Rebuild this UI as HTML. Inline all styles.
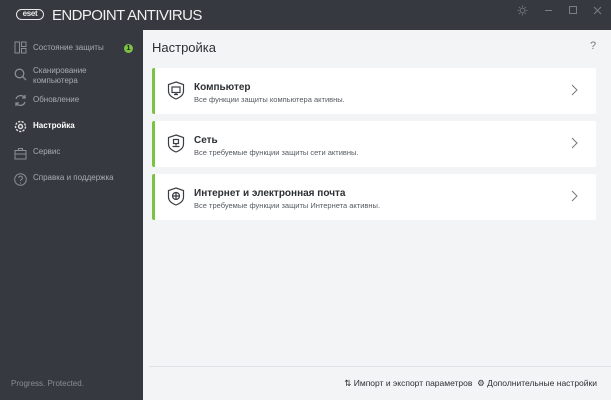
<!DOCTYPE html>
<html><head><meta charset="utf-8"><style>
*{margin:0;padding:0;box-sizing:border-box}
body{width:611px;height:400px;overflow:hidden;font-family:"Liberation Sans","DejaVu Sans",sans-serif;background:#363a40;position:relative}
.top{position:absolute;left:0;top:0;width:611px;height:30px;background:#363a40}
.logo{position:absolute;left:16px;top:9px;width:28px;height:11px;border:1.5px solid #e8e8e8;border-radius:6px;color:#e8e8e8;font-size:8px;font-weight:bold;line-height:8px;text-align:center;letter-spacing:-0.3px}
.brand{position:absolute;left:52px;top:7px;color:#f0f0f0;font-size:15px;letter-spacing:-0.6px}
.side{position:absolute;left:0;top:30px;width:143px;height:370px;background:#363a40}
.item{position:absolute;left:33px;color:#a8abb0;font-size:8px;line-height:10px}
.ic{position:absolute;left:14px;width:13px;height:13px}
.main{position:absolute;left:143px;top:30px;width:468px;height:370px;background:#f3f4f6}
h1{position:absolute;left:9px;top:10px;font-size:13px;font-weight:normal;color:#2c2f33}
.card{position:absolute;left:9px;width:444px;height:46px;background:#fff;border-left:3px solid #7dc242;border-radius:2px}
.ct{position:absolute;left:39px;top:14px;font-size:10px;font-weight:bold;color:#2c2f33}
.cs{position:absolute;left:39px;top:27px;font-size:7.5px;color:#555a60}
.sh{position:absolute;left:12px;top:13px}
.chev{position:absolute;right:18px;top:16px}
.foot{position:absolute;top:378px;right:14px;font-size:8.5px;color:#2c2f33;white-space:nowrap}
</style></head><body>
<div class="top">
<div class="logo">eset</div>
<div class="brand">ENDPOINT ANTIVIRUS</div>
<svg style="position:absolute;left:517px;top:5px" width="11" height="11" viewBox="0 0 11 11" stroke="#6a6e74" fill="none"><circle cx="5.5" cy="5.5" r="2.2"/><path d="M5.5 0.5v2M5.5 8.5v2M0.5 5.5h2M8.5 5.5h2M2 2l1.4 1.4M7.6 7.6L9 9M2 9l1.4-1.4M7.6 3.4L9 2"/></svg>
<svg style="position:absolute;left:545px;top:5px" width="40" height="11" stroke="#7a7e84" fill="none"><path d="M0 5.5h7"/><rect x="24.5" y="1.5" width="7" height="7"/></svg>
<svg style="position:absolute;left:593px;top:6px" width="9" height="9" stroke="#7a7e84"><path d="M1 1l7 7M8 1L1 8"/></svg>
</div>
<div class="side">
<svg class="ic" style="top:11px" viewBox="0 0 13 13" fill="none" stroke="#8a8e94"><rect x="1" y="1" width="4.5" height="11"/><rect x="7.5" y="1" width="4.5" height="4.5"/><rect x="7.5" y="7.5" width="4.5" height="4.5"/></svg>
<div class="item" style="top:13px">Состояние защиты</div>
<div style="position:absolute;left:124px;top:14px;width:9px;height:9px;border-radius:50%;background:#7dc242;color:#222;font-size:7px;font-weight:bold;text-align:center;line-height:9px">1</div>
<svg class="ic" style="top:38px" viewBox="0 0 13 13" fill="none" stroke="#8a8e94" stroke-width="1.3"><circle cx="5.5" cy="5.5" r="4.3"/><path d="M8.6 8.6L12 12"/></svg>
<div class="item" style="top:36px">Сканирование<br>компьютера</div>
<svg class="ic" style="top:64px" viewBox="0 0 13 13" fill="none" stroke="#8a8e94" stroke-width="1.3"><path d="M2 5A5 5 0 0 1 11 4M11 8A5 5 0 0 1 2 9"/><path d="M11 1v3H8M2 12V9h3"/></svg>
<div class="item" style="top:65px">Обновление</div>
<svg class="ic" style="top:90px" viewBox="0 0 13 13" fill="none" stroke="#e0e0e0" stroke-width="1.4"><circle cx="6.5" cy="6.5" r="2"/><circle cx="6.5" cy="6.5" r="5" stroke-dasharray="2.2 1.3"/></svg>
<div class="item" style="top:91px;color:#fff;font-weight:bold">Настройка</div>
<svg class="ic" style="top:117px" viewBox="0 0 13 13" fill="none" stroke="#8a8e94"><rect x="1" y="3.5" width="11" height="8.5"/><path d="M4.5 3.5V1.5h4v2M1 7h11"/></svg>
<div class="item" style="top:117px">Сервис</div>
<svg class="ic" style="top:143px" viewBox="0 0 13 13" fill="none" stroke="#8a8e94"><circle cx="6.5" cy="6.5" r="5.8"/><path d="M4.8 5a1.8 1.8 0 1 1 2.3 1.7c-.6.2-.6.7-.6 1.3M6.5 9.5v1"/></svg>
<div class="item" style="top:143px">Справка и поддержка</div>
<div class="item" style="left:11px;top:349px;color:#8a8e94">Progress. Protected.</div>
</div>
<div class="main">
<h1>Настройка</h1>
<div style="position:absolute;left:447px;top:10px;font-size:11px;color:#777">?</div>
<div class="card" style="top:38px">
<svg class="sh" width="18" height="19" viewBox="0 0 18 19" fill="none" stroke="#3a3d42" stroke-width="1.2"><path d="M9 1L16.5 3.5V10c0 4-3.5 6.5-7.5 8C5 16.5 1.5 14 1.5 10V3.5z"/><rect x="5" y="6" width="8" height="5.5"/><path d="M9 11.5v2M7 13.5h4"/></svg>
<div class="ct">Компьютер</div><div class="cs">Все функции защиты компьютера активны.</div>
<svg class="chev" width="7" height="12" fill="none" stroke="#777"><path d="M1 1l5 5-5 5"/></svg></div>
<div class="card" style="top:91px">
<svg class="sh" width="18" height="19" viewBox="0 0 18 19" fill="none" stroke="#3a3d42" stroke-width="1.2"><path d="M9 1L16.5 3.5V10c0 4-3.5 6.5-7.5 8C5 16.5 1.5 14 1.5 10V3.5z"/><rect x="6.5" y="5.5" width="5" height="4"/><path d="M9 9.5v2M5.5 12.5h7"/></svg>
<div class="ct">Сеть</div><div class="cs">Все требуемые функции защиты сети активны.</div>
<svg class="chev" width="7" height="12" fill="none" stroke="#777"><path d="M1 1l5 5-5 5"/></svg></div>
<div class="card" style="top:144px">
<svg class="sh" width="18" height="19" viewBox="0 0 18 19" fill="none" stroke="#3a3d42" stroke-width="1.2"><path d="M9 1L16.5 3.5V10c0 4-3.5 6.5-7.5 8C5 16.5 1.5 14 1.5 10V3.5z"/><circle cx="9" cy="9" r="3.5"/><path d="M5.5 9h7M9 5.5v7"/></svg>
<div class="ct">Интернет и электронная почта</div><div class="cs">Все требуемые функции защиты Интернета активны.</div>
<svg class="chev" width="7" height="12" fill="none" stroke="#777"><path d="M1 1l5 5-5 5"/></svg></div>
<div style="position:absolute;left:6px;top:336px;width:462px;height:1px;background:#e0e2e5"></div>
</div>
<div class="foot">⇅ Импорт и экспорт параметров &nbsp;⚙ Дополнительные настройки</div>
</body></html>
